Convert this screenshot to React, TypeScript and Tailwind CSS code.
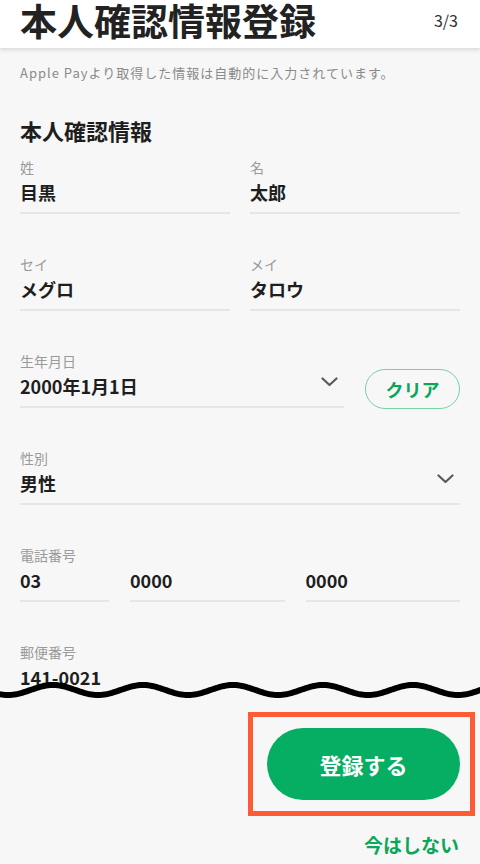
import React from 'react';

const FONT = { fontFamily: '"Noto Sans CJK JP", "Noto Sans", sans-serif' };

function Chevron() {
  return (
    <svg width="17" height="10" viewBox="0 0 17 10" fill="none">
      <path d="M1.5 1.5 L8.5 8 L15.5 1.5" stroke="#5a5a5a" strokeWidth="2.2" strokeLinecap="round" strokeLinejoin="round" />
    </svg>
  );
}

function Field({
  label,
  value,
  chevron = false,
  className = '',
}: {
  label: string;
  value: string;
  chevron?: boolean;
  className?: string;
}) {
  return (
    <div className={`flex flex-col border-b-2 border-[#e6e6e6] pb-[7px] ${className}`}>
      <div className="text-[14px] leading-[20px] text-[#9a9a9a]">{label}</div>
      <div className="mt-[2px] flex items-center justify-between">
        <span className="text-[18px] font-bold leading-[26px] text-[#1e1e1e]">{value}</span>
        {chevron && (
          <span className="mb-[8px] mr-[6px]">
            <Chevron />
          </span>
        )}
      </div>
    </div>
  );
}

function Wave() {
  // sine wave marking the cut in the screenshot
  let d = '';
  for (let x = -4; x <= 484; x += 2) {
    const y = 12 - 5 * Math.cos((2 * Math.PI * (x - 53)) / 90);
    d += `${x === -4 ? 'M' : 'L'}${x} ${y.toFixed(2)} `;
  }
  return (
    <svg className="absolute left-0 top-[-12px]" width="480" height="24" viewBox="0 0 480 24">
      <path d={`${d} L484 24 L-4 24 Z`} fill="#f7f7f7" />
      <path d={d} fill="none" stroke="#000" strokeWidth="6" />
    </svg>
  );
}

export default function App() {
  return (
    <div className="flex h-[864px] w-[480px] flex-col overflow-hidden bg-[#f7f7f7]" style={FONT}>
      {/* Header */}
      <header className="relative z-10 flex h-[48px] shrink-0 items-start justify-between bg-white pl-5 pr-[22px] shadow-[0_2px_4px_rgba(0,0,0,0.12)]">
        <h1 className="text-[37px] font-bold leading-[41px] text-[#222]">本人確認情報登録</h1>
        <span className="mt-[8px] text-[16px] leading-[24px] text-[#333]">3/3</span>
      </header>

      {/* Form */}
      <main className="h-[642px] shrink-0 overflow-hidden px-5">
        <p className="mt-[16px] text-[13px] leading-[18px] tracking-[1px] text-[#8a8a8a]">
          Apple Payより取得した情報は自動的に入力されています。
        </p>
        <h2 className="mt-[34px] text-[22px] font-bold leading-[28px] text-[#1e1e1e]">本人確認情報</h2>

        <div className="mt-[13px] flex flex-col gap-[40px]">
          <div className="grid grid-cols-2 gap-5">
            <Field label="姓" value="目黒" />
            <Field label="名" value="太郎" />
          </div>
          <div className="grid grid-cols-2 gap-5">
            <Field label="セイ" value="メグロ" />
            <Field label="メイ" value="タロウ" />
          </div>
          <div className="flex items-end gap-[21px]">
            <Field label="生年月日" value="2000年1月1日" chevron className="flex-1" />
            <button className="mb-[-1px] flex h-[40px] w-[95px] items-center justify-center rounded-full border-[1.5px] border-[#74d3a2] text-[18px] font-bold text-[#0aa65a]">
              クリア
            </button>
          </div>
          <Field label="性別" value="男性" chevron />
          <div className="grid grid-cols-[89px_1fr_1fr] gap-[21px]">
            <Field label="電話番号" value="03" />
            <Field label="&nbsp;" value="0000" />
            <Field label="&nbsp;" value="0000" />
          </div>
          <Field label="郵便番号" value="141-0021" />
        </div>
      </main>

      {/* Footer */}
      <section className="relative flex flex-1 flex-col items-end">
        <Wave />
        <div className="mr-[5px] mt-[22px] flex h-[104px] w-[227px] items-center border-[5px] border-[#ff5a36] pl-[14px]">
          <button className="flex h-[72px] w-[193px] items-center justify-center rounded-full bg-[#05ae62] text-[22px] font-bold text-white">
            登録する
          </button>
        </div>
        <button className="mr-[21px] mt-[16px] text-[19px] font-bold leading-[26px] text-[#0aa65a]">今はしない</button>
      </section>
    </div>
  );
}
